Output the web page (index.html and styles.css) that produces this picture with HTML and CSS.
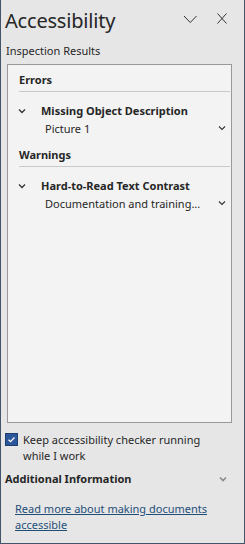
FILE: index.html
```html
<!DOCTYPE html>
<html>
<head>
<meta charset="utf-8">
<link rel="stylesheet" href="styles.css">
</head>
<body>
<div class="pane">
  <div class="header">
    <div class="title">Accessibility</div>
    <div class="hicons">
      <svg class="hicon" width="14" height="14" viewBox="0 0 14 14"><path d="M1 4 L7.25 10.5 L13.5 4" fill="none" stroke="#333" stroke-width="1"/></svg>
      <svg class="hicon" width="14" height="14" viewBox="0 0 14 14"><path d="M2.5 1.5 L11.5 11.5 M11.5 1.5 L2.5 11.5" fill="none" stroke="#333" stroke-width="1"/></svg>
    </div>
  </div>
  <div class="subtitle">Inspection Results</div>
  <div class="results">
    <div class="section">Errors</div>
    <div class="issue">
      <div class="issue-row">
        <svg class="chev" width="10" height="10" viewBox="0 0 10 10"><path d="M2 3.5 L5 6.5 L8 3.5" fill="none" stroke="#333" stroke-width="1.3"/></svg>
        <span class="issue-name">Missing Object Description</span>
      </div>
      <div class="item-row">
        <span class="item-name">Picture 1</span>
        <svg class="chev" width="10" height="10" viewBox="0 0 10 10"><path d="M2 3.5 L5 6.5 L8 3.5" fill="none" stroke="#333" stroke-width="1.1"/></svg>
      </div>
    </div>
    <div class="section">Warnings</div>
    <div class="issue">
      <div class="issue-row">
        <svg class="chev" width="10" height="10" viewBox="0 0 10 10"><path d="M2 3.5 L5 6.5 L8 3.5" fill="none" stroke="#333" stroke-width="1.3"/></svg>
        <span class="issue-name">Hard-to-Read Text Contrast</span>
      </div>
      <div class="item-row">
        <span class="item-name">Documentation and training...</span>
        <svg class="chev" width="10" height="10" viewBox="0 0 10 10"><path d="M2 3.5 L5 6.5 L8 3.5" fill="none" stroke="#333" stroke-width="1.1"/></svg>
      </div>
    </div>
  </div>
  <label class="keep">
    <span class="checkbox"><svg width="13" height="13" viewBox="0 0 13 13"><path d="M3 6.8 L5.4 9 L10 4.2" fill="none" stroke="#fff" stroke-width="1.5"/></svg></span>
    <span class="keep-text">Keep accessibility checker running while I work</span>
  </label>
  <div class="addl">
    <span>Additional Information</span>
    <svg class="chev small" width="10" height="10" viewBox="0 0 10 10"><path d="M2 3.5 L5 6.5 L8 3.5" fill="none" stroke="#8a8a8a" stroke-width="1.6"/></svg>
  </div>
  <a class="link" href="#">Read more about making documents accessible</a>
</div>
</body>
</html>
```
FILE: styles.css
```css
html, body {
  margin: 0;
  padding: 0;
}
body {
  width: 245px;
  height: 544px;
  font-family: "Noto Sans", "Open Sans", sans-serif;
  color: #262626;
  background: #e6e6e6;
}
.pane {
  box-sizing: border-box;
  width: 245px;
  height: 544px;
  background: #e6e6e6;
  border-left: 1px solid #44546a;
  border-right: 1px solid #44546a;
  border-bottom: 1px solid #44546a;
  padding: 0 12px 0 4px;
  display: flex;
  flex-direction: column;
}
.header {
  display: flex;
  align-items: center;
  justify-content: space-between;
  height: 40px;
}
.title {
  font-size: 20px;
  letter-spacing: -0.2px;
  line-height: 28px;
  color: #262626;
  margin-top: 2px;
}
.hicons {
  display: flex;
  gap: 18px;
  margin-right: 3px;
  margin-top: -3px;
}
.hicon { display: block; }
.subtitle {
  font-size: 11px;
  line-height: 16px;
  margin-top: 3px;
  margin-left: 1px;
}
.results {
  margin-top: 5px;
  margin-left: 2px;
  height: 359px;
  box-sizing: border-box;
  border: 1px solid #999;
  background: #f3f3f3;
  padding: 7px 1px 0 11px;
}
.section {
  font-weight: bold;
  font-size: 11px;
  line-height: 16px;
  padding: 0 0 3px 0;
  border-bottom: 1px solid #c8c8c8;
  margin-bottom: 10px;
}
.issue {
  margin-bottom: 10px;
}
.issue-row {
  display: flex;
  align-items: center;
  height: 17px;
}
.issue-row .chev {
  margin-left: -2px;
  margin-right: 14px;
}
.issue-name {
  font-weight: bold;
  font-size: 11px;
}
.item-row {
  display: flex;
  align-items: center;
  justify-content: space-between;
  height: 18px;
  padding-left: 26px;
  padding-right: 3px;
  font-size: 11px;
}
.chev { display: block; }
.keep {
  display: flex;
  align-items: flex-start;
  margin-top: 9px;
  font-size: 11px;
  line-height: 16px;
}
.checkbox {
  width: 13px;
  height: 13px;
  box-sizing: border-box;
  background: #2b579a;
  border: 1px solid #1e3f73;
  display: flex;
  align-items: center;
  justify-content: center;
  margin-top: 1px;
  margin-right: 5px;
  flex: none;
}
.checkbox svg { display: block; }
.keep-text { width: 195px; }
.addl {
  display: flex;
  justify-content: space-between;
  align-items: center;
  margin-top: 7px;
  font-weight: bold;
  font-size: 11px;
  line-height: 16px;
}
.addl .chev { margin-right: 4px; }
.link {
  margin-top: 14px;
  margin-left: 10px;
  font-size: 11px;
  line-height: 16px;
  color: #1f4e79;
  text-decoration: underline;
  width: 205px;
}
```
